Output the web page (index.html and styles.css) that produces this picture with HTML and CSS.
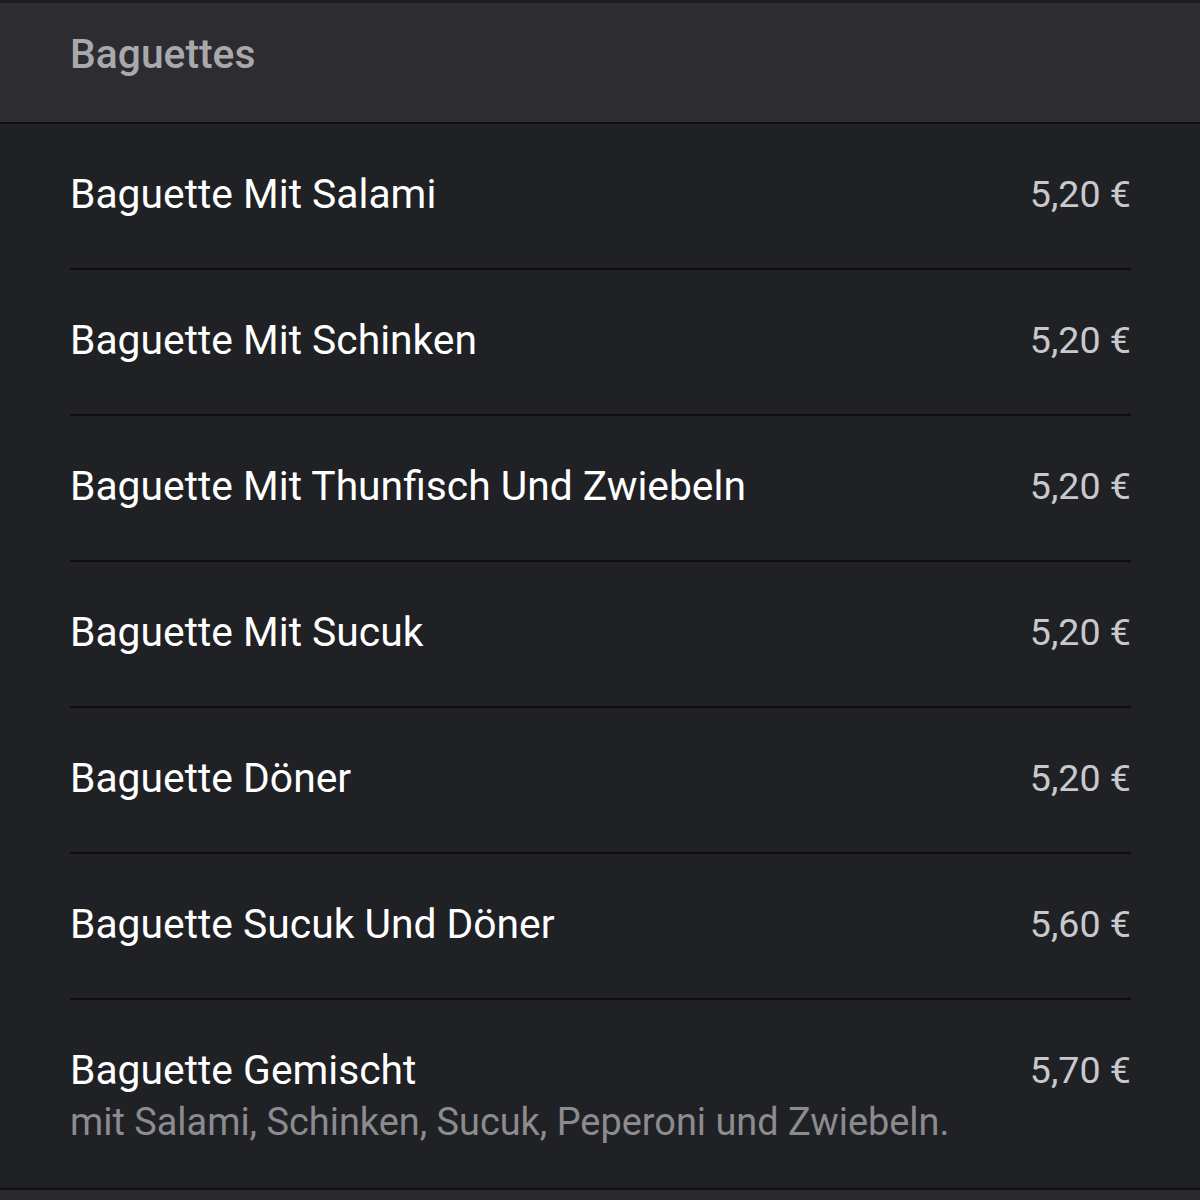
FILE: index.html
```html
<!DOCTYPE html>
<html lang="de">
<head>
  <meta charset="UTF-8">
  <meta name="viewport" content="width=device-width, initial-scale=1.0">
  <title>Baguettes</title>
  <link rel="stylesheet" href="styles.css">
</head>
<body>

  <div class="menu">
    <div class="category-header">
      <h2 class="category-title">Baguettes</h2>
    </div>

    <div class="items">
      <div class="item">
        <div class="item-info">
          <div class="item-name">Baguette Mit Salami</div>
        </div>
        <div class="item-price">5,20 €</div>
      </div>

      <div class="item">
        <div class="item-info">
          <div class="item-name">Baguette Mit Schinken</div>
        </div>
        <div class="item-price">5,20 €</div>
      </div>

      <div class="item">
        <div class="item-info">
          <div class="item-name">Baguette Mit Thunfisch Und Zwiebeln</div>
        </div>
        <div class="item-price">5,20 €</div>
      </div>

      <div class="item">
        <div class="item-info">
          <div class="item-name">Baguette Mit Sucuk</div>
        </div>
        <div class="item-price">5,20 €</div>
      </div>

      <div class="item">
        <div class="item-info">
          <div class="item-name">Baguette Döner</div>
        </div>
        <div class="item-price">5,20 €</div>
      </div>

      <div class="item">
        <div class="item-info">
          <div class="item-name">Baguette Sucuk Und Döner</div>
        </div>
        <div class="item-price">5,60 €</div>
      </div>

      <div class="item item-last">
        <div class="item-info">
          <div class="item-name">Baguette Gemischt</div>
          <div class="item-desc">mit Salami, Schinken, Sucuk, Peperoni und Zwiebeln.</div>
        </div>
        <div class="item-price">5,70 €</div>
      </div>
    </div>
  </div>

</body>
</html>
```

FILE: styles.css
```css
body {
  font-family: Roboto, "Liberation Sans", sans-serif;
  background-color: #2a2a2e;
  color: #fff;
  margin: 0;
  padding: 0;
}

.menu {
  border-top: 3px solid #1e1e21;
}

.category-header {
  background-color: #2d2d31;
  padding: 0 70px;
  border-bottom: 2px solid #0f0f11;
  box-sizing: border-box;
  height: 121px;
}

.category-title {
  margin: 0;
  padding-top: 27px;
  font-size: 40.8px;
  line-height: 48px;
  font-weight: 500;
  color: #a9a9ad;
}

.items {
  background-color: #202125;
  padding: 0 69px 0 70px;
  border-bottom: 2px solid #111113;
}

.item {
  display: flex;
  justify-content: space-between;
  align-items: flex-start;
  padding: 46px 0 50px;
  border-bottom: 2px solid #0e0e10;
}

.item-last {
  border-bottom: none;
  padding-bottom: 42px;
}

.item-name {
  font-size: 40.8px;
  line-height: 48px;
  color: #fff;
}

.item-desc {
  font-size: 37.9px;
  line-height: 48px;
  margin-top: 4px;
  color: #8b8b90;
}

.item-price {
  font-size: 37.6px;
  line-height: 48px;
  color: #c9c9cd;
  white-space: nowrap;
}
```
